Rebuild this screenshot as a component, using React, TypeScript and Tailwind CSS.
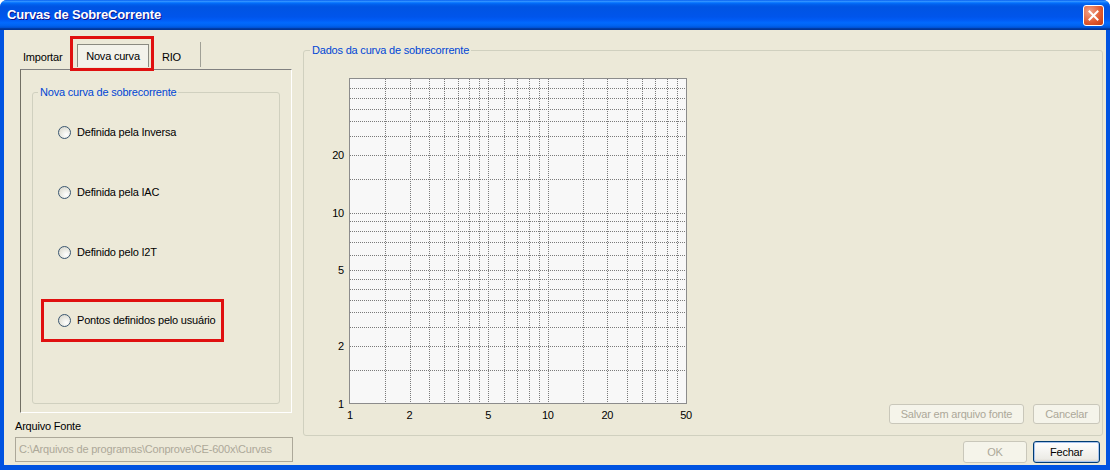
import React from "react";

const font = "font-['Liberation_Sans',Arial,sans-serif]";

const gridValues = [1.5, 2, 2.5, 3, 3.5, 4, 4.5, 5, 6, 7, 8, 9, 10, 15, 20, 25, 30, 35, 40, 45];
const yLabels = [1, 2, 5, 10, 20];
const xLabels = [1, 2, 5, 10, 20, 50];

// plot area inside the svg
const X = (v: number) => 30 + 197.8 * Math.log10(v);
const Y = (v: number) => 333.5 - 191 * Math.log10(v);

const Chart = () => (
  <svg width="380" height="355" className="block shrink-0">
    <rect x="29.5" y="8.5" width="337" height="325" fill="#f8f8f8" stroke="#8c8c8c" />
    {gridValues.map((v) => {
      const x = Math.round(X(v)) + 0.5;
      return (
        <line key={"x" + v} x1={x} y1={9} x2={x} y2={333} stroke="#7a7a7a" strokeDasharray="1 1" />
      );
    })}
    {gridValues.map((v) => {
      const y = Math.round(Y(v)) + 0.5;
      return (
        <line key={"y" + v} x1={30} y1={y} x2={366} y2={y} stroke="#7a7a7a" strokeDasharray="1 1" />
      );
    })}
    {yLabels.map((v) => (
      <text
        key={"yl" + v}
        x={24}
        y={Y(v) + 4}
        textAnchor="end"
        fontSize="11"
        fontFamily="Liberation Sans, Arial, sans-serif"
        fill="#000"
      >
        {v}
      </text>
    ))}
    {xLabels.map((v) => (
      <text
        key={"xl" + v}
        x={X(v)}
        y={349}
        textAnchor="middle"
        fontSize="11"
        fontFamily="Liberation Sans, Arial, sans-serif"
        fill="#000"
      >
        {v}
      </text>
    ))}
  </svg>
);

const Radio = ({ label }: { label: string }) => (
  <div className="flex items-center h-[13px]">
    <span className="w-[13px] h-[13px] rounded-full border border-[#3a5670] bg-[radial-gradient(circle_at_65%_70%,#ffffff_0%,#e6e6de_55%,#d4d2c8_100%)] shrink-0" />
    <span className="ml-[6px] text-[11px] leading-[13px] text-black whitespace-nowrap">{label}</span>
  </div>
);

const Button = ({ label, w, h, disabled, primary }: { label: string; w: string; h: string; disabled?: boolean; primary?: boolean }) => (
  <div
    className={
      "flex items-center justify-center rounded-[3px] text-[11px] " +
      w +
      " " +
      h +
      (disabled
        ? " border border-[#c9c7ba] bg-[#f5f4ea] text-[#aca899]"
        : primary
        ? " border border-[#003c74] bg-[linear-gradient(to_bottom,#ffffff,#ecebe6_85%,#d6d0c5)] text-black shadow-[inset_0_0_0_1px_#a9c4ee]"
        : " border border-[#003c74] bg-white text-black")
    }
  >
    {label}
  </div>
);

export default function App() {
  return (
    <div className={"w-[1110px] h-[470px] bg-white " + font}>
      <div className="w-full h-full flex flex-col rounded-t-[7px] bg-[#0053e1] overflow-hidden">
        {/* title bar */}
        <div className="h-[30px] shrink-0 flex items-center justify-between pl-[7px] pr-[6px] bg-[linear-gradient(to_bottom,#0058ee_0%,#3593ff_4%,#288eff_6%,#127dff_8%,#036ffc_10%,#0262ee_14%,#0057e5_20%,#0054e3_24%,#0055eb_56%,#005bf5_66%,#026afe_76%,#0062ef_86%,#0052d6_92%,#0040ab_94%,#003092_100%)]">
          <span className="text-white font-bold text-[13px] tracking-[-0.15px] [text-shadow:1px_1px_#0f1089]">Curvas de SobreCorrente</span>
          <div className="w-[21px] h-[21px] rounded-[3px] border border-white bg-[radial-gradient(circle_at_30%_30%,#f0a28a,#e0582e_60%,#c23a12)] flex items-center justify-center">
            <svg width="11" height="11" viewBox="0 0 11 11">
              <path d="M1.5 1.5 L9.5 9.5 M9.5 1.5 L1.5 9.5" stroke="#fff" strokeWidth="2" strokeLinecap="square" />
            </svg>
          </div>
        </div>

        {/* body */}
        <div className="flex-1 mx-[4px] mb-[5px] bg-[#ece9d8] flex text-black text-[11px] tracking-[-0.2px]">
          {/* left column */}
          <div className="w-[278px] ml-[11px] flex flex-col">
            {/* tabs */}
            <div className="h-[29px] mt-[10px] ml-[5px] flex items-end">
              <div className="w-[57px] h-[23px] pl-[3px] flex items-center">Importar</div>
              <div className="relative">
                <div className="w-[72px] h-[23px] border border-[#8a8a80] border-b-0 bg-[#f3f2ea] flex items-center justify-center mb-[2px]">
                  Nova curva
                </div>
                <div className="absolute left-[-7px] top-[-8px] w-[84px] h-[35px] border-[3px] border-[#e01010]" />
              </div>
              <div className="w-[51px] h-[23px] pl-[13px] flex items-center">RIO</div>
              <div className="w-px h-[25px] bg-[#a0a096] mb-[2px]" />
            </div>
            {/* tab panel */}
            <div className="ml-[5px] w-[272px] h-[344px] border-t border-l border-t-[#808080] border-l-[#716f64] border-r border-b border-r-white border-b-white pt-[22px] px-[11px]">
              <div className="relative h-[312px] border border-[#d0d0bf] rounded-[3px] pt-[33px] pl-[25px]">
                <span className="absolute left-[5px] top-[-7px] px-[2px] bg-[#ece9d8] text-[#0046d5] leading-[13px]">
                  Nova curva de sobrecorrente
                </span>
                <Radio label="Definida pela Inversa" />
                <div className="mt-[47px]">
                  <Radio label="Definida pela IAC" />
                </div>
                <div className="mt-[47px]">
                  <Radio label="Definido pelo I2T" />
                </div>
                <div className="mt-[40px] ml-[-17px] w-[183px] h-[43px] border-[3px] border-[#e01010] pl-[14px] flex items-center">
                  <Radio label="Pontos definidos pelo usuário" />
                </div>
              </div>
            </div>
            <div className="mt-[7px] leading-[13px]">Arquivo Fonte</div>
            <div className="mt-[4px] w-[278px] h-[25px] border border-[#aca899] bg-[#ece9d8] text-[#aca899] pl-[3px] flex items-center whitespace-nowrap overflow-hidden">
              C:\Arquivos de programas\Conprove\CE-600x\Curvas
            </div>
          </div>

          {/* right column */}
          <div className="ml-[10px] w-[800px] flex flex-col">
            <div className="relative mt-[20px] h-[386px] border border-[#d0d0bf] rounded-[3px] flex">
              <span className="absolute left-[6px] top-[-7px] px-[2px] bg-[#ece9d8] text-[#0046d5] leading-[13px]">
                Dados da curva de sobrecorrente
              </span>
              <div className="ml-[16px] mt-[19px]">
                <Chart />
              </div>
              <div className="flex-1 flex items-end justify-end gap-[9px] pb-[11px] pr-[2px]">
                <Button label="Salvar em arquivo fonte" w="w-[135px]" h="h-[20px]" disabled />
                <Button label="Cancelar" w="w-[67px]" h="h-[20px]" disabled />
              </div>
            </div>
            <div className="mt-[5px] flex justify-end gap-[6px] pr-[3px]">
              <Button label="OK" w="w-[64px]" h="h-[22px]" disabled />
              <Button label="Fechar" w="w-[67px]" h="h-[22px]" primary />
            </div>
          </div>
        </div>
      </div>
    </div>
  );
}
